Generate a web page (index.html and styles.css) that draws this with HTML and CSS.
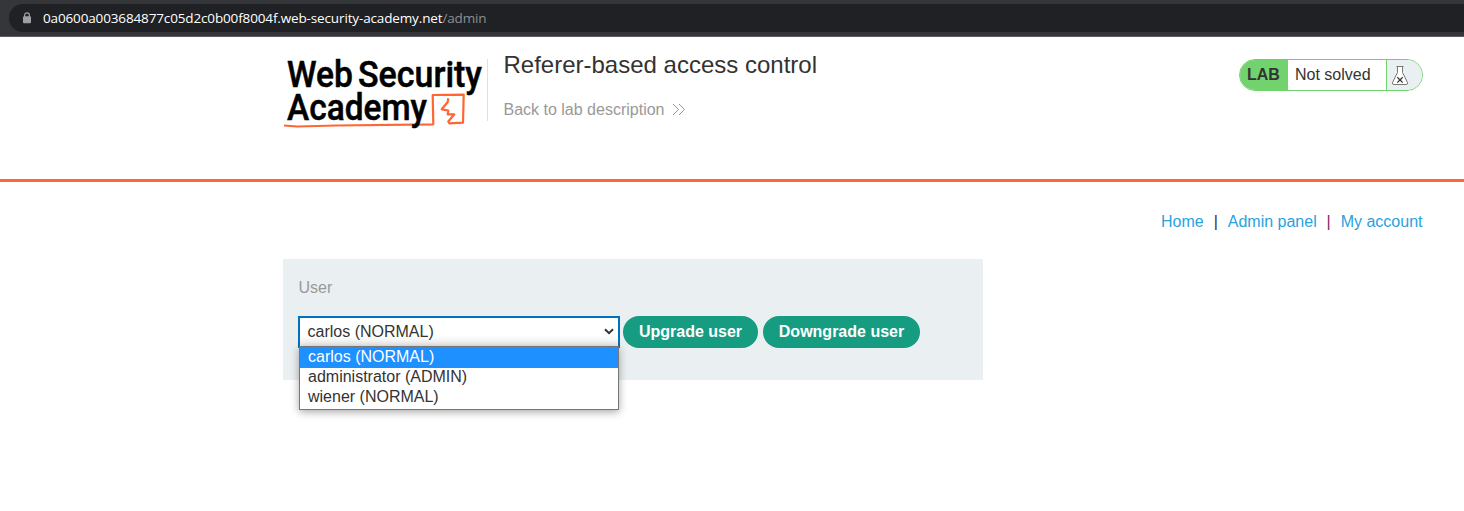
FILE: index.html
```html
<!DOCTYPE html>
<html lang="en">
<head>
<meta charset="utf-8">
<title>Referer-based access control</title>
<link rel="stylesheet" href="styles.css">
</head>
<body>
<div class="browser-bar">
  <div class="address">
    <svg class="lock" width="10" height="12" viewBox="0 0 10 12"><path d="M2.6 5V3.2a2.4 2.4 0 0 1 4.8 0V5" fill="none" stroke="#9aa0a6" stroke-width="1.2"/><rect x="1" y="4.3" width="8" height="7" rx="1" fill="#9aa0a6"/></svg>
    <span class="url">0a0600a003684877c05d2c0b00f8004f.web-security-academy.net<span class="path">/admin</span></span>
  </div>
</div>
<header class="lab-header">
  <div class="container header-row">
    <svg class="logo" width="204" height="84" viewBox="0 0 204 84">
      <path d="M1 81.500L14 82.500L54 81.500L150.300 80.300L149.700 51L180.700 50.700L180 78.700L166.300 79.300L165.300 77.500L171.300 70.300H164.700L165.300 66.500L158.700 65.300L164.700 58L165.300 54.300" fill="none" stroke="#ff6633" stroke-width="2.200" stroke-linejoin="round"/>
      <g class="logo-text">
        <text x="4" y="43.3" textLength="66" lengthAdjust="spacingAndGlyphs">Web</text>
        <text x="75" y="43.3" textLength="124" lengthAdjust="spacingAndGlyphs">Security</text>
        <text x="4" y="76" textLength="140" lengthAdjust="spacingAndGlyphs">Academy</text>
      </g>
    </svg>
    <div class="title-block">
      <h1>Referer-based access control</h1>
      <a class="back">Back to lab description
        <svg width="14" height="14" viewBox="0 0 14 14"><path d="M1 1L6.500 6.500L1 12M7 1L12.500 6.500L7 12" fill="none" stroke="#999" stroke-width="1"/></svg>
      </a>
    </div>
    <div class="status">
      <span class="lab">LAB</span>
      <span class="state">Not solved</span>
      <span class="flask">
        <svg width="18" height="22" viewBox="0 0 18 22"><path d="M5.500 1.500H12.500M6.500 1.500V7.500L1.500 17.500Q1 19.500 3 19.500H15Q17 19.500 16.500 17.500L11.500 7.500V1.500" fill="#fff" stroke="#777" stroke-width="1"/><path d="M6.300 12.200L11.700 17.600M11.700 12.200L6.300 17.600" stroke="#333" stroke-width="1.300"/></svg>
      </span>
    </div>
  </div>
</header>
<main class="container">
  <nav class="links"><a>Home</a><span class="bar">|</span><a>Admin panel</a><span class="bar wine">|</span><a>My account</a></nav>
  <form class="panel">
    <label>User</label>
    <div class="controls">
      <div class="select">
        <div class="field">carlos (NORMAL)
          <svg width="10" height="7" viewBox="0 0 10 7"><path d="M1 1.300L5 5.200L9 1.300" fill="none" stroke="#333" stroke-width="2"/></svg>
        </div>
        <div class="menu">
          <div class="option selected">carlos (NORMAL)</div>
          <div class="option">administrator (ADMIN)</div>
          <div class="option">wiener (NORMAL)</div>
        </div>
      </div>
      <button class="upgrade" type="button">Upgrade user</button>
      <button class="downgrade" type="button">Downgrade user</button>
    </div>
  </form>
</main>
</body>
</html>
```
FILE: styles.css
```css
* { box-sizing: border-box; }
body {
  margin: 0;
  height: 511px;
  overflow: hidden;
  background: #fff;
  color: #333332;
  font: 16px/20px "Liberation Sans", Arial, sans-serif;
}
.browser-bar {
  height: 37px;
  padding: 4px 0 0 9px;
  background: #35363a;
  border-bottom: 1px solid #5c5d60;
}
.address {
  display: flex;
  align-items: center;
  height: 28px;
  padding-left: 13px;
  border-radius: 14px 0 0 14px;
  background: #202124;
}
.lock { margin-right: 11px; }
.url {
  color: #fff;
  font: 13.5px/20px "Open Sans", sans-serif;
  letter-spacing: -0.14px;
  white-space: nowrap;
}
.path { color: #8b8f94; }
.container { width: 1140px; margin-left: 283px; }
.lab-header { height: 145px; border-bottom: 3px solid #ff6633; }
.header-row { display: flex; padding-top: 7px; }
.logo { flex: none; overflow: visible; }
.logo-text {
  font: 500 37px Roboto, sans-serif;
  fill: #000;
  stroke: #000;
  stroke-width: 0.5px;
}
.title-block {
  height: 62px;
  margin-top: 15px;
  padding-left: 15.5px;
  border-left: 1px solid #e0e0e0;
}
h1 {
  margin: -9px 0 0;
  font-size: 24px;
  line-height: 30px;
  font-weight: 400;
  white-space: nowrap;
}
.back {
  display: flex;
  align-items: center;
  gap: 8px;
  margin-top: 20px;
  color: #999;
}
.status {
  display: flex;
  width: 184px;
  height: 32px;
  margin: 15px 0 0 auto;
  border: 1px solid #72d36e;
  border-radius: 16px;
  overflow: hidden;
  line-height: 30px;
}
.lab {
  width: 48px;
  padding-left: 7px;
  background: #72d36e;
  font-weight: 700;
}
.state { width: 99px; padding-left: 7px; border-right: 1px solid #72d36e; }
.flask { flex: 1; padding: 5px 0 0 4px; background: #eaeff2; line-height: 0; }
.links {
  display: flex;
  justify-content: flex-end;
  margin-top: 30px;
  padding-right: 0.5px;
  color: #29a2dd;
}
.bar { width: 24px; color: #333; text-align: center; }
.wine { color: #7d2860; }
.panel {
  width: 700px;
  height: 121px;
  margin-top: 27px;
  padding: 19px 15px 0;
  background: #eaeff2;
}
label { display: block; padding-left: 0.5px; color: #999; }
.controls { display: flex; margin-top: 18px; }
.select { position: relative; width: 322px; height: 32px; }
.field {
  display: flex;
  justify-content: space-between;
  align-items: center;
  height: 32px;
  padding: 0 4px 1px 7.5px;
  border: 2px solid #0071bc;
  background: linear-gradient(#fff 60%, #ededed);
}
.menu {
  position: absolute;
  top: 30px;
  left: 1px;
  width: 320px;
  height: 64px;
  border: 1px solid #767676;
  background: #fff;
  box-shadow: 0 2px 8px rgba(0, 0, 0, .35);
}
.option { height: 20px; padding-left: 8px; line-height: 18px; }
.selected { height: 21px; line-height: 20px; background: #1e90ff; color: #fff; }
button {
  height: 32px;
  padding: 0 0 1px;
  border: 0;
  border-radius: 16px;
  background: #169c80;
  color: #fff;
  font: 700 16px "Liberation Sans", Arial, sans-serif;
}
.upgrade { width: 135px; margin-left: 3px; }
.downgrade { width: 157px; margin-left: 5px; }
```
